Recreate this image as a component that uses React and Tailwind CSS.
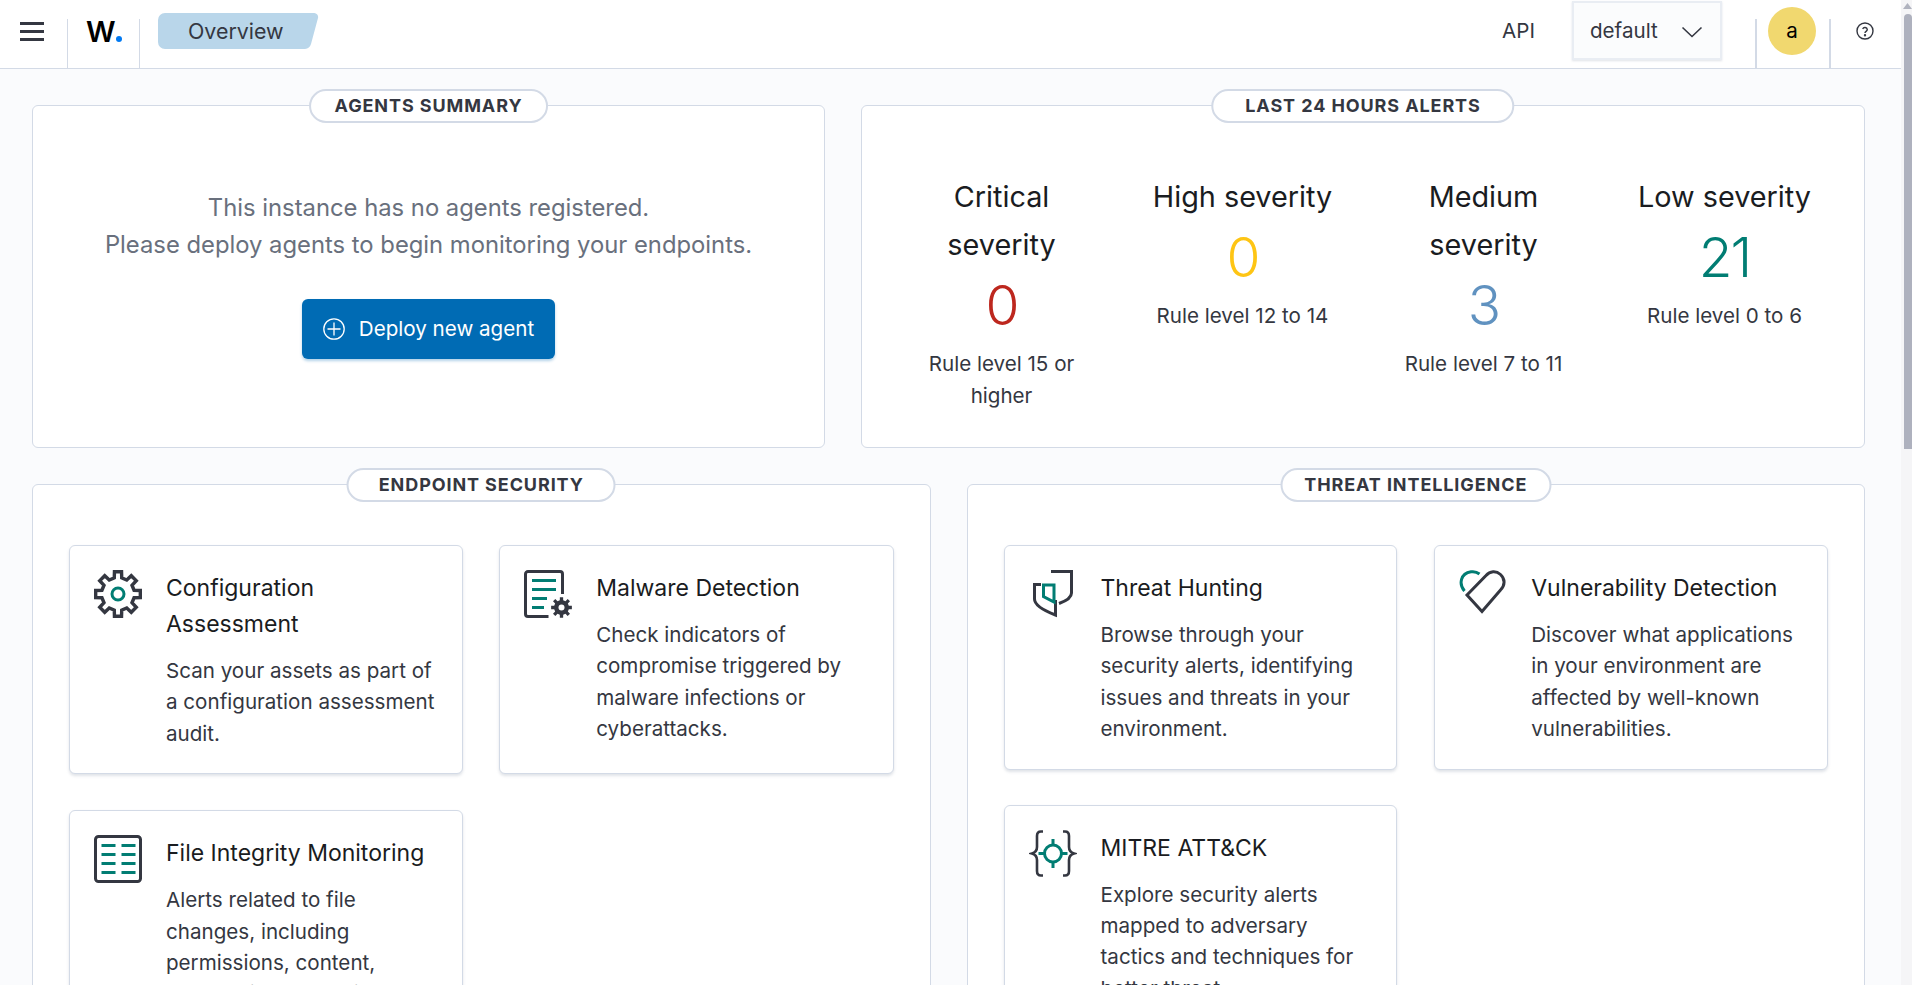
import React from "react";

const gearPath = (cx, cy, R, r, n) => {
  const pts = [];
  const step = (Math.PI * 2) / n;
  for (let i = 0; i < n; i++) {
    const a = i * step - Math.PI / 2;
    const w1 = step * 0.2;
    const w2 = step * 0.29;
    const add = (rad, ang) => pts.push(`${(cx + rad * Math.cos(ang)).toFixed(2)} ${(cy + rad * Math.sin(ang)).toFixed(2)}`);
    add(r, a - w2);
    add(R, a - w1);
    add(R, a + w1);
    add(r, a + w2);
  }
  return "M" + pts.join("L") + "Z";
};

const DARK = "#343741";
const TEAL = "#017d73";

const GearIcon = () => (
  <svg width="48" height="48" viewBox="0 0 48 48" fill="none">
    <path d={gearPath(24, 24, 22.6, 16.5, 8)} stroke={DARK} strokeWidth="3.400" strokeLinejoin="miter" />
    <circle cx="24" cy="24" r="6" stroke={TEAL} strokeWidth="3" />
  </svg>
);

const MalwareIcon = () => (
  <svg width="48" height="48" viewBox="0 0 48 48" fill="none">
    <path d="M24.500 46.500H4a2.500 2.500 0 0 1-2.500-2.500V4A2.500 2.500 0 0 1 4 1.500h32A2.500 2.500 0 0 1 38.500 4v20" stroke={DARK} strokeWidth="3" />
    <path d="M8 10.500h24M8 19.500h24M8 28.500h15M8 37.500h12" stroke={TEAL} strokeWidth="3" />
    <path d={gearPath(37.500, 37.500, 10.500, 7.500, 8)} fill={DARK} />
    <circle cx="37.500" cy="37.500" r="3" fill="white" />
  </svg>
);

const ShieldIcon = () => (
  <svg width="48" height="48" viewBox="-4 0 48 48" fill="none">
    <path d="M18 1.500H38.500V23Q38.500 29 26 33.500" stroke={DARK} strokeWidth="3" />
    <path d="M8 14.500H1.500V29Q1.500 37 22.500 45V30" stroke={DARK} strokeWidth="3" />
    <path d="M10.500 15H21V32L10.500 26.500Z" stroke={TEAL} strokeWidth="3" />
  </svg>
);

const HeartIcon = () => (
  <svg width="48" height="48" viewBox="0 0 48 48" fill="none">
    <path d="M8 25L27 5.500C31 1 37 0.500 41.500 4.500C46.500 9 46 15.500 41.500 20L23 41.500Z" stroke={DARK} strokeWidth="3" />
    <path d="M5.500 21C-0.500 14 1.500 3.500 12 1.800C15 1.300 18 2 20.500 4" stroke={TEAL} strokeWidth="3" />
  </svg>
);

const ListIcon = () => (
  <svg width="48" height="48" viewBox="0 0 48 48" fill="none">
    <rect x="1.500" y="1.500" width="45" height="45" rx="3" stroke={DARK} strokeWidth="3" />
    <path d="M7.500 10.500h14M27.500 10.500h14M7.500 19.500h14M27.500 19.500h14M7.500 28.500h14M27.500 28.500h14M7.500 37.500h14M27.500 37.500h14" stroke={TEAL} strokeWidth="3" />
  </svg>
);

const MitreIcon = () => (
  <svg width="48" height="48" viewBox="-1 0 48 48" fill="none">
    <path d="M13 1.500H11Q7 1.500 7 6V17Q7 22 2 23.500Q7 25 7 30V41Q7 45.500 11 45.500H13" stroke={DARK} strokeWidth="2.600" />
    <path d="M33 1.500H35Q39 1.500 39 6V17Q39 22 44 23.500Q39 25 39 30V41Q39 45.500 35 45.500H33" stroke={DARK} strokeWidth="2.600" />
    <circle cx="23" cy="23.500" r="8.500" stroke={TEAL} strokeWidth="3" />
    <path d="M23 9v6M23 32v6M8.500 23.500h6M31.500 23.500h6" stroke={TEAL} strokeWidth="3" />
  </svg>
);

function Card({ icon, title, children }) {
  return (
    <div className="flex gap-[24px] bg-white border border-[#d3dae6] rounded-[6px] shadow-[0_2px_3px_rgba(152,162,179,0.3)] p-[24px] min-w-0">
      <div className="shrink-0 w-[48px] h-[48px]">{icon}</div>
      <div className="min-w-0">
        <h3 className="text-[23px] leading-[36px] text-[#1a1c21] font-normal">{title}</h3>
        <p className="mt-[13px] text-[20.600px] leading-[31.400px] text-[#343741]">{children}</p>
      </div>
    </div>
  );
}

function Panel({ label, pill, className, children }) {
  return (
    <section className={`relative bg-white border border-[#d3dae6] rounded-[6px] ${className}`}>
      <div className={`absolute left-1/2 top-[-17px] -translate-x-1/2 h-[34px] pb-[1px] ${pill} flex items-center bg-white border-2 border-[#d3dae6] rounded-full text-[18px] font-bold tracking-[0.9px] text-[#343741] whitespace-nowrap`}>
        {label}
      </div>
      {children}
    </section>
  );
}

function Severity({ title, value, color, rule }) {
  return (
    <div className="text-center">
      <h3 className="text-[28.800px] leading-[48px] text-[#1a1c21]">{title}</h3>
      <div className={`text-[55px] leading-[72px] font-light tracking-[-2px] ${color}`}>{value}</div>
      <p className="mt-[7px] text-[20.600px] leading-[32px] text-[#343741]">{rule}</p>
    </div>
  );
}

export default function App() {
  return (
    <div className="flex h-screen w-full overflow-hidden bg-[#fafbfd] font-[Inter,sans-serif]">
      <div className="flex-1 min-w-0 flex flex-col">
        <header className="h-[69px] shrink-0 flex items-stretch bg-white border-b border-[#d3dae6]">
          <button className="w-[68px] self-end h-[49px] border-r border-[#d3dae6] flex flex-col items-start justify-center gap-[5px] pl-[20px] pb-[24px]">
            <span className="block w-[24px] h-[3px] bg-[#343741]"></span>
            <span className="block w-[24px] h-[3px] bg-[#343741]"></span>
            <span className="block w-[24px] h-[3px] bg-[#343741]"></span>
          </button>
          <div className="w-[72px] self-end h-[49px] border-r border-[#d3dae6] pl-[18px] flex items-start">
            <span className="-mt-[5px] text-[29px] leading-[36px] font-semibold text-black tracking-[-1px]">W</span>
            <span className="w-[6px] h-[6px] rounded-full bg-[#0079f2] mt-[17px] ml-[1px]"></span>
          </div>
          <div className="relative ml-[18px] mt-[13px] w-[161px] h-[36px] flex items-center pl-[30px] text-[21.400px] text-[#343741]">
            <svg className="absolute left-0 top-0" width="161" height="36" viewBox="0 0 161 36">
              <path d="M7 0H156a4 4 0 0 1 4 5L153 31a7 7 0 0 1-6 5H7a7 7 0 0 1-7-7V7a7 7 0 0 1 7-7Z" fill="#b9d6ea" />
            </svg>
            <span className="relative">Overview</span>
          </div>
          <div className="flex-1"></div>
          <div className="self-center -mt-[6px] text-[20.600px] text-[#343741] mr-[37px]">API</div>
          <div className="mt-[1px] w-[150px] h-[59px] flex items-center justify-between pl-[16px] pr-[17px] pt-[2px] bg-[#fbfcfd] border-2 border-[#e9edf3] shadow-[0_1px_2px_rgba(152,162,179,0.3)] text-[20.600px] text-[#343741]">
            <span>default</span>
            <svg width="22" height="12" viewBox="0 0 22 12" fill="none">
              <path d="M1.500 1.500L11 10.500L20.500 1.500" stroke="#343741" strokeWidth="1.600" />
            </svg>
          </div>
          <div className="ml-[33px] self-end w-[2px] h-[49px] bg-[#d3dae6]"></div>
          <div className="ml-[11px] mr-[13px] mt-[7px] w-[48px] h-[48px] rounded-full bg-[#f1d86f] flex items-center justify-center text-[20.600px] text-black">a</div>
          <div className="self-end w-[2px] h-[49px] bg-[#d3dae6]"></div>
          <div className="ml-[25px] mr-[27px] self-start mt-[22px]">
            <svg width="18" height="18" viewBox="0 0 18 18" fill="none" stroke="#343741" strokeWidth="1.400">
              <circle cx="9" cy="9" r="8" />
              <path d="M6.700 7a2.400 2.400 0 0 1 4.600.6C11.300 9.200 9 9.500 9 11" />
              <circle cx="9" cy="13.300" r="0.500" fill="#343741" />
            </svg>
          </div>
        </header>
        <main className="flex-1 min-h-0 overflow-hidden pl-[32px] pr-[36px] pt-[36px] flex flex-col gap-[36px]">
          <div className="grid grid-cols-[793px_1fr] gap-[36px]">
            <Panel label="AGENTS SUMMARY" pill="px-[24px]" className="flex flex-col items-center pt-[83px]">
              <p className="text-[23.800px] leading-[37px] text-[#69707d] text-center">
                This instance has no agents registered.
                <br />
                Please deploy agents to begin monitoring your endpoints.
              </p>
              <button className="mt-[36px] w-[253px] h-[60px] flex items-center justify-center gap-[14px] bg-[#006bb4] rounded-[6px] shadow-[0_2px_3px_rgba(0,107,180,0.3)] text-white text-[20.600px]">
                <svg width="22" height="22" viewBox="0 0 22 22" fill="none" stroke="white" strokeWidth="1.300">
                  <circle cx="11" cy="11" r="10.200" />
                  <path d="M11 4.500v13M4.500 11h13" />
                </svg>
                Deploy new agent
              </button>
            </Panel>
            <Panel label="LAST 24 HOURS ALERTS" pill="px-[32px]" className="grid grid-cols-4 gap-[40px] px-[39px] pt-[67px] pb-[35px]">
              <Severity title="Critical severity" value="0" color="text-[#bd271e]" rule="Rule level 15 or higher" />
              <Severity title="High severity" value="0" color="text-[#fec514]" rule="Rule level 12 to 14" />
              <Severity title="Medium severity" value="3" color="text-[#6092c0]" rule="Rule level 7 to 11" />
              <Severity title="Low severity" value="21" color="text-[#017d73]" rule="Rule level 0 to 6" />
            </Panel>
          </div>
          <div className="grid grid-cols-2 gap-[36px] items-start">
            <Panel label="ENDPOINT SECURITY" pill="px-[30px]" className="grid grid-cols-2 gap-x-[36px] gap-y-[36px] px-[36px] pt-[60px] pb-[37px]">
              <Card icon={<GearIcon />} title="Configuration Assessment">
                Scan your assets as part of a configuration assessment audit.
              </Card>
              <Card icon={<MalwareIcon />} title="Malware Detection">
                Check indicators of compromise triggered by malware infections or cyberattacks.
              </Card>
              <Card icon={<ListIcon />} title="File Integrity Monitoring">
                Alerts related to file changes, including permissions, content, ownership, and attributes.
              </Card>
            </Panel>
            <Panel label="THREAT INTELLIGENCE" pill="px-[22px]" className="grid grid-cols-2 gap-x-[37px] gap-y-[35px] px-[36px] pt-[60px] pb-[37px]">
              <Card icon={<ShieldIcon />} title="Threat Hunting">
                Browse through your security alerts, identifying issues and threats in your environment.
              </Card>
              <Card icon={<HeartIcon />} title="Vulnerability Detection">
                Discover what applications in your environment are affected by well-known vulnerabilities.
              </Card>
              <Card icon={<MitreIcon />} title="MITRE ATT&CK">
                Explore security alerts mapped to adversary tactics and techniques for better threat understanding.
              </Card>
            </Panel>
          </div>
        </main>
      </div>
      <div className="w-[11px] shrink-0 bg-[#f5f5f7] flex flex-col items-end">
        <svg className="mt-[3px] mr-[0px]" width="9" height="6" viewBox="0 0 9 6">
          <path d="M4.500 0L9 6H0Z" fill="#b0b3bf" />
        </svg>
        <div className="mt-[5px] w-[8px] h-[435px] bg-[#aeb1be] rounded-t-[4px]"></div>
      </div>
    </div>
  );
}
